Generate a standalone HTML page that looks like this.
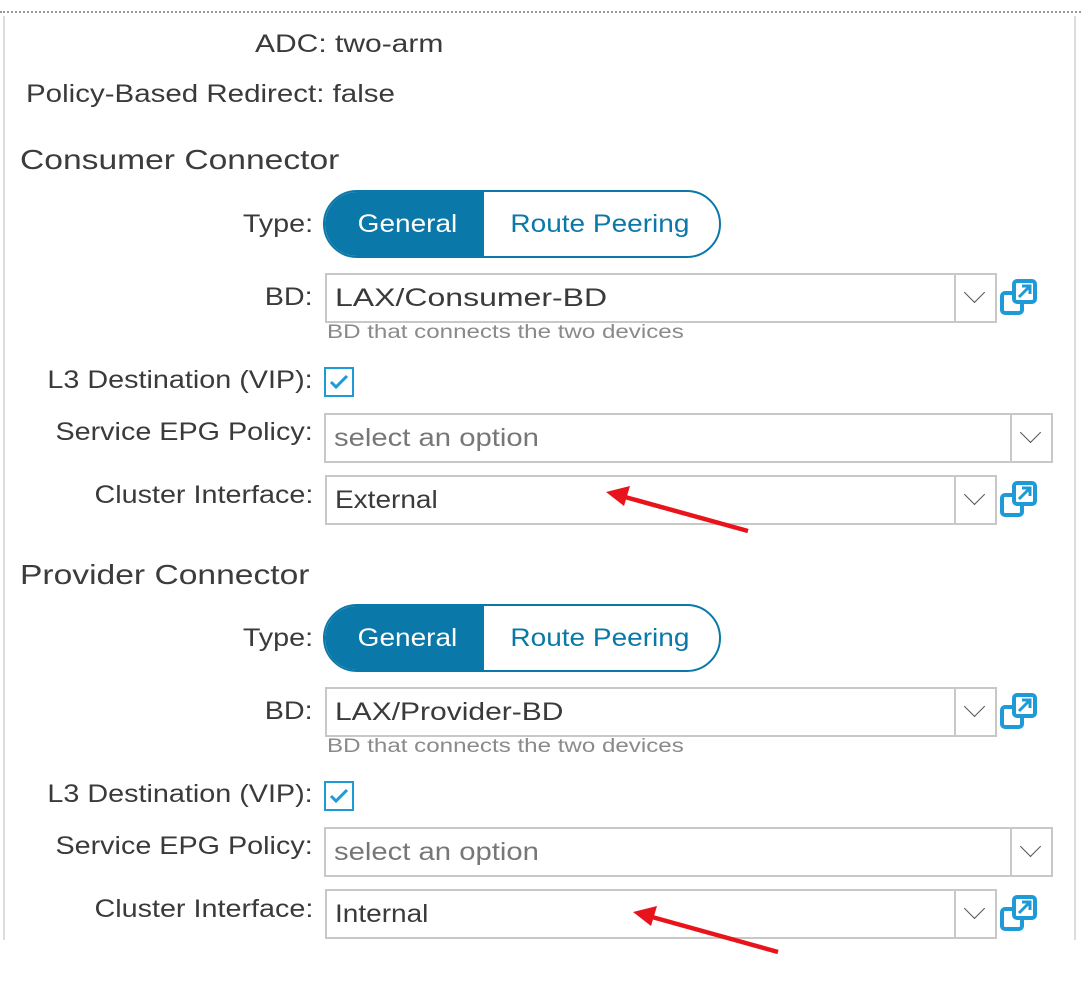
<!DOCTYPE html>
<html><head><meta charset="utf-8"><style>
*{margin:0;padding:0;box-sizing:border-box}
body{width:1081px;height:997px;background:#fff;position:relative;overflow:hidden;font-family:"Liberation Sans",sans-serif;color:#3a3a3a}
.a{position:absolute;white-space:nowrap}
.s{display:inline-block;transform-origin:left center}
.lbl{font-size:25px;line-height:30px;text-align:right;right:768px}
.lbl .s{transform:scaleX(1.15);transform-origin:right center}
.h{font-size:28px;line-height:34px;left:20px;color:#3c3c3c}
.h .s{transform:scaleX(1.2)}
.box{position:absolute;border:2px solid #c8c8c8;background:#fff;font-size:25px;line-height:46px;padding-left:8px;color:#3a3a3a;white-space:nowrap}
.dd{position:absolute;top:-2px;bottom:-2px;width:43px;right:-2px;border:2px solid #c8c8c8;}
.dd:after{content:"";position:absolute;left:11px;top:10px;width:14px;height:14px;border-right:1.5px solid #555;border-bottom:1.5px solid #555;transform:rotate(45deg)}
.tog{position:absolute;left:323px;width:398px;height:68px;border:2px solid #0a78a8;border-radius:34px;overflow:hidden;font-size:25px}
.tog .g{position:absolute;left:0;top:0;width:159px;height:100%;background:#0a78a8;color:#fff;text-align:center;line-height:64px;padding-left:6px}
.tog .r{position:absolute;left:159px;right:0;top:0;height:100%;color:#0a78a8;text-align:center;line-height:64px;padding-right:4px}
.tog .s{transform:scaleX(1.12);transform-origin:center}
.hint{font-size:19px;color:#8a8a8a;left:327px}
.hint .s{transform:scaleX(1.27)}
.cb{position:absolute;left:324px;width:30px;height:30px;border:2px solid #1e9bd7}
.ic{position:absolute;left:1000px;width:38px;height:38px}
</style></head><body>
<div class="a" style="left:0;top:11px;width:1081px;border-top:2px dotted #999"></div>
<div class="a" style="left:3px;top:16px;height:924px;border-left:2px solid #ddd"></div>
<div class="a" style="left:1074px;top:16px;height:924px;border-left:2px solid #ddd"></div>

<div class="a" style="left:255px;top:29px;font-size:25px;line-height:30px"><span class="s" style="transform:scaleX(1.2)">ADC: two-arm</span></div>
<div class="a" style="left:26px;top:79px;font-size:25px;line-height:30px"><span class="s" style="transform:scaleX(1.18)">Policy-Based Redirect: false</span></div>

<div class="a h" style="top:143px"><span class="s">Consumer Connector</span></div>
<div class="a lbl" style="top:209px"><span class="s">Type:</span></div>
<div class="tog" style="top:190px"><div class="g"><span class="s">General</span></div><div class="r"><span class="s">Route Peering</span></div></div>
<div class="a lbl" style="top:282px"><span class="s">BD:</span></div>
<div class="box" style="left:325px;top:273px;width:672px;height:50px"><span class="s" style="transform:scaleX(1.28)">LAX/Consumer-BD</span><div class="dd"></div></div>
<svg class="ic" style="top:279px" viewBox="0 0 38 38"><rect x="2" y="14" width="20" height="20" rx="3" fill="none" stroke="#1e9bd7" stroke-width="4"/><rect x="14" y="2" width="21" height="21" rx="3" fill="#fff" stroke="#1e9bd7" stroke-width="4"/><path d="M19 18 L29 8 M22 7 H30 V15" fill="none" stroke="#1e9bd7" stroke-width="3"/></svg>
<div class="a hint" style="top:322px"><span class="s">BD that connects the two devices</span></div>
<div class="a lbl" style="top:365px"><span class="s">L3 Destination (VIP):</span></div>
<div class="cb" style="top:367px"><svg width="26" height="26" viewBox="0 0 26 26"><path d="M5 13 L10 18 L21 7" fill="none" stroke="#1e9bd7" stroke-width="3"/></svg></div>
<div class="a lbl" style="top:417px"><span class="s">Service EPG Policy:</span></div>
<div class="box" style="left:324px;top:413px;width:729px;height:50px;color:#777"><span class="s" style="transform:scaleX(1.17)">select an option</span><div class="dd"></div></div>
<div class="a lbl" style="top:480px"><span class="s">Cluster Interface:</span></div>
<div class="box" style="left:325px;top:475px;width:672px;height:50px"><span class="s" style="transform:scaleX(1.12)">External</span><div class="dd"></div></div>
<svg class="ic" style="top:481px" viewBox="0 0 38 38"><rect x="2" y="14" width="20" height="20" rx="3" fill="none" stroke="#1e9bd7" stroke-width="4"/><rect x="14" y="2" width="21" height="21" rx="3" fill="#fff" stroke="#1e9bd7" stroke-width="4"/><path d="M19 18 L29 8 M22 7 H30 V15" fill="none" stroke="#1e9bd7" stroke-width="3"/></svg>

<div class="a h" style="top:558px"><span class="s">Provider Connector</span></div>
<div class="a lbl" style="top:623px"><span class="s">Type:</span></div>
<div class="tog" style="top:604px"><div class="g"><span class="s">General</span></div><div class="r"><span class="s">Route Peering</span></div></div>
<div class="a lbl" style="top:696px"><span class="s">BD:</span></div>
<div class="box" style="left:325px;top:687px;width:672px;height:50px"><span class="s" style="transform:scaleX(1.2)">LAX/Provider-BD</span><div class="dd"></div></div>
<svg class="ic" style="top:693px" viewBox="0 0 38 38"><rect x="2" y="14" width="20" height="20" rx="3" fill="none" stroke="#1e9bd7" stroke-width="4"/><rect x="14" y="2" width="21" height="21" rx="3" fill="#fff" stroke="#1e9bd7" stroke-width="4"/><path d="M19 18 L29 8 M22 7 H30 V15" fill="none" stroke="#1e9bd7" stroke-width="3"/></svg>
<div class="a hint" style="top:736px"><span class="s">BD that connects the two devices</span></div>
<div class="a lbl" style="top:779px"><span class="s">L3 Destination (VIP):</span></div>
<div class="cb" style="top:781px"><svg width="26" height="26" viewBox="0 0 26 26"><path d="M5 13 L10 18 L21 7" fill="none" stroke="#1e9bd7" stroke-width="3"/></svg></div>
<div class="a lbl" style="top:831px"><span class="s">Service EPG Policy:</span></div>
<div class="box" style="left:324px;top:827px;width:729px;height:50px;color:#777"><span class="s" style="transform:scaleX(1.17)">select an option</span><div class="dd"></div></div>
<div class="a lbl" style="top:894px"><span class="s">Cluster Interface:</span></div>
<div class="box" style="left:325px;top:889px;width:672px;height:50px"><span class="s" style="transform:scaleX(1.12)">Internal</span><div class="dd"></div></div>
<svg class="ic" style="top:895px" viewBox="0 0 38 38"><rect x="2" y="14" width="20" height="20" rx="3" fill="none" stroke="#1e9bd7" stroke-width="4"/><rect x="14" y="2" width="21" height="21" rx="3" fill="#fff" stroke="#1e9bd7" stroke-width="4"/><path d="M19 18 L29 8 M22 7 H30 V15" fill="none" stroke="#1e9bd7" stroke-width="3"/></svg>

<svg class="a" style="left:0;top:0" width="1081" height="997">
<line x1="748" y1="531" x2="625" y2="497" stroke="#e8141b" stroke-width="4.5"/>
<polygon points="606,492 630,486 624,506" fill="#e8141b"/>
<line x1="778" y1="952" x2="652" y2="917" stroke="#e8141b" stroke-width="4.5"/>
<polygon points="633,912 657,906 651,926" fill="#e8141b"/>
</svg>
</body></html>
